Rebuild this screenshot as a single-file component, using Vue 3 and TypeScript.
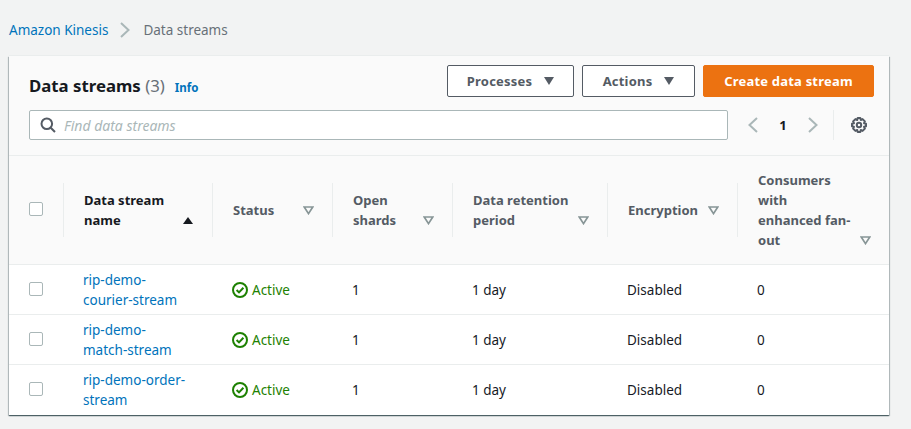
<template>
  <div class="page">
    <nav class="crumbs">
      <a class="link">Amazon Kinesis</a>
      <svg class="crumb-sep" width="12" height="16" viewBox="0 0 12 16"><path d="M2 1 L9.5 8 L2 15" /></svg>
      <span class="crumb-now">Data streams</span>
    </nav>

    <section class="card">
      <header class="card-head">
        <div class="title-row">
          <h1 class="title">Data streams <span class="count">(3)</span></h1>
          <a class="info">Info</a>
          <div class="actions">
            <button class="btn btn-processes" type="button">Processes <i class="caret"></i></button>
            <button class="btn btn-actions" type="button">Actions <i class="caret"></i></button>
            <button class="btn-primary" type="button">Create data stream</button>
          </div>
        </div>
        <div class="tools-row">
          <div class="search">
            <svg width="16" height="16" viewBox="0 0 16 16"><circle cx="6.8" cy="6.8" r="5.3" /><path d="M10.7 10.7 L15 15" /></svg>
            <span class="placeholder">Find data streams</span>
          </div>
          <div class="pager">
            <svg class="chev" width="12" height="16" viewBox="0 0 12 16"><path d="M10 1 L2.5 8 L10 15" /></svg>
            <span class="page-num">1</span>
            <svg class="chev" width="12" height="16" viewBox="0 0 12 16"><path d="M2 1 L9.5 8 L2 15" /></svg>
          </div>
          <div class="settings">
            <svg width="16" height="16" viewBox="0 0 16 16">
              <circle cx="8" cy="8" r="2.2" />
              <path d="M6.7 1 H9.3 L9.8 3 L11.6 2.1 L13.9 4.4 L13 6.2 L15 6.7 V9.3 L13 9.8 L13.9 11.6 L11.6 13.9 L9.8 13 L9.3 15 H6.7 L6.2 13 L4.4 13.9 L2.1 11.6 L3 9.8 L1 9.3 V6.7 L3 6.2 L2.1 4.4 L4.4 2.1 L6.2 3 Z" stroke-linejoin="round" />
            </svg>
          </div>
        </div>
      </header>

      <table class="grid">
        <colgroup>
          <col v-for="w in colWidths" :key="w.id" :style="{ width: w.px + 'px' }" />
        </colgroup>
        <thead>
          <tr>
            <th class="check-cell"><span class="check"></span></th>
            <th v-for="col in columns" :key="col.label" :class="{ sorted: col.sorted }">
              <div class="th-inner">
                <div class="th-content">
                  <span class="th-label">{{ col.label }}</span>
                  <svg v-if="col.sorted" class="sort" width="12" height="9" viewBox="0 0 12 9"><path d="M6 1 L11 8 H1 Z" fill="#16191f" /></svg>
                  <svg v-else class="sort" width="11" height="9" viewBox="0 0 11 9"><path d="M1.2 1 H9.8 L5.5 7.6 Z" fill="none" stroke="#879596" stroke-width="1.7" /></svg>
                </div>
              </div>
            </th>
          </tr>
        </thead>
        <tbody>
          <tr v-for="row in rows" :key="row.name">
            <td class="check-cell"><span class="check"></span></td>
            <td class="name-cell"><a class="link">{{ row.name }}</a></td>
            <td class="status-cell">
              <span class="status">
                <svg width="16" height="16" viewBox="0 0 16 16"><circle cx="8" cy="8" r="7" /><path d="M4.6 8 L7 10.4 L11.4 5.8" /></svg>
                Active
              </span>
            </td>
            <td>{{ row.shards }}</td>
            <td>{{ row.retention }}</td>
            <td>{{ row.encryption }}</td>
            <td>{{ row.consumers }}</td>
          </tr>
        </tbody>
      </table>
    </section>
  </div>
</template>

<script setup lang="ts">
interface Column {
  label: string
  sorted?: boolean
}

interface StreamRow {
  name: string
  shards: number
  retention: string
  encryption: string
  consumers: number
}

const colWidths = [
  { id: 'check', px: 54 },
  { id: 'name', px: 149 },
  { id: 'status', px: 120 },
  { id: 'shards', px: 120 },
  { id: 'retention', px: 155 },
  { id: 'encryption', px: 130 },
  { id: 'consumers', px: 152 },
]

const columns: Column[] = [
  { label: 'Data stream name', sorted: true },
  { label: 'Status' },
  { label: 'Open shards' },
  { label: 'Data retention period' },
  { label: 'Encryption' },
  { label: 'Consumers with enhanced fan-out' },
]

const rows: StreamRow[] = [
  { name: 'rip-demo-courier-stream', shards: 1, retention: '1 day', encryption: 'Disabled', consumers: 0 },
  { name: 'rip-demo-match-stream', shards: 1, retention: '1 day', encryption: 'Disabled', consumers: 0 },
  { name: 'rip-demo-order-stream', shards: 1, retention: '1 day', encryption: 'Disabled', consumers: 0 },
]
</script>

<style>
html,
body {
  margin: 0;
  background: #f2f3f3;
}
</style>

<style scoped>
.page {
  box-sizing: border-box;
  width: 911px;
  height: 429px;
  padding: 20px 22px 0 9px;
  overflow: hidden;
  background: #f2f3f3;
  color: #16191f;
  font-family: "Noto Sans", "Open Sans", sans-serif;
  font-size: 13.5px;
  line-height: 20px;
}

.crumbs {
  display: flex;
  align-items: center;
  height: 20px;
  margin-bottom: 16px;
}

.link {
  color: #0073bb;
}

.crumb-sep {
  margin: 0 12px 0 11px;
}

.crumb-sep path {
  fill: none;
  stroke: #aab7b8;
  stroke-width: 2;
}

.crumb-now {
  color: #687078;
}

.card {
  background: #fff;
  box-shadow: 0 -1px 0 0 #eaeded, 0 1px 1px 0 rgba(0, 28, 36, 0.5), 1px 1px 1px 0 rgba(0, 28, 36, 0.2), -1px 1px 1px 0 rgba(0, 28, 36, 0.2);
}

.card-head {
  padding: 9px 15px 15px 20px;
  background: #fafafa;
  border-bottom: 1px solid #eaeded;
}

.title-row {
  display: flex;
  align-items: center;
  height: 32px;
}

.title {
  margin: 10px 0 0;
  font-size: 16.8px;
  line-height: 24px;
  font-weight: 700;
}

.count {
  font-weight: 400;
  color: #687078;
}

.info {
  margin: 13px 0 0 10px;
  color: #0073bb;
  font-size: 11.5px;
  font-weight: 700;
}

.actions {
  display: flex;
  gap: 8px;
  margin-left: auto;
}

.btn,
.btn-primary {
  box-sizing: border-box;
  height: 32px;
  margin: 0;
  border-radius: 2px;
  font-family: inherit;
  font-size: 13px;
  font-weight: 700;
  letter-spacing: 0.2px;
  cursor: pointer;
}

.btn {
  display: flex;
  align-items: center;
  justify-content: center;
  gap: 12px;
  padding: 0;
  background: #fff;
  border: 1px solid #545b64;
  color: #545b64;
}

.btn-processes {
  width: 127px;
}

.btn-actions {
  width: 113px;
}

.btn-primary {
  width: 171px;
  padding: 0;
  background: #ec7211;
  border: 1px solid #ec7211;
  color: #fff;
}

.caret {
  width: 0;
  height: 0;
  border-left: 5.5px solid transparent;
  border-right: 5.5px solid transparent;
  border-top: 8px solid #545b64;
}

.tools-row {
  display: flex;
  align-items: center;
  margin-top: 13px;
  height: 30px;
}

.search {
  box-sizing: border-box;
  display: flex;
  align-items: center;
  width: 699px;
  height: 30px;
  padding-left: 10px;
  background: #fff;
  border: 1px solid #aab7b8;
  border-radius: 2px;
}

.search svg {
  fill: none;
  stroke: #545b64;
  stroke-width: 2;
}

.placeholder {
  margin: 1px 0 0 8px;
  color: #aab7b8;
  font-size: 14px;
  font-style: italic;
}

.pager {
  box-sizing: border-box;
  display: flex;
  align-items: center;
  width: 87px;
  height: 30px;
  margin-left: 19px;
  border-right: 1px solid #eaeded;
}

.chev path {
  fill: none;
  stroke: #aab7b8;
  stroke-width: 2;
}

.page-num {
  width: 48px;
  text-align: center;
  font-weight: 700;
  font-size: 13px;
}

.settings {
  display: flex;
  margin-left: 17px;
}

.settings svg {
  fill: none;
  stroke: #545b64;
  stroke-width: 2;
}

.grid {
  width: 880px;
  table-layout: fixed;
  border-collapse: collapse;
}

th {
  height: 108px;
  padding: 0;
  background: #fafafa;
  border-bottom: 1px solid #eaeded;
  color: #545b64;
  font-size: 13px;
  font-weight: 700;
  text-align: left;
}

th.sorted {
  color: #16191f;
}

.th-inner {
  box-sizing: border-box;
  display: flex;
  align-items: center;
  height: 54px;
  padding: 0 18px 0 20px;
  border-left: 1px solid #eaeded;
}

.th-content {
  display: flex;
  flex: 1;
  align-items: flex-end;
  justify-content: space-between;
}

.th-label {
  display: block;
}

th:last-child .th-label {
  width: 96px;
}

.sort {
  flex: none;
  margin: 0 0 5px 4px;
}

td {
  height: 49px;
  padding: 0 20px;
  border-bottom: 1px solid #eaeded;
}

tbody tr:last-child td {
  height: 50px;
  border-bottom: none;
}

.name-cell {
  padding-right: 24px;
}

th.check-cell,
td.check-cell {
  padding: 0 0 0 20px;
}

.check {
  box-sizing: border-box;
  display: block;
  width: 14px;
  height: 14px;
  margin-bottom: 2px;
  background: #fff;
  border: 1px solid #aab7b8;
  border-radius: 2px;
}

.status {
  display: flex;
  align-items: center;
  gap: 4px;
  color: #1d8102;
}

.status svg {
  fill: none;
  stroke: #1d8102;
  stroke-width: 2;
}
</style>
